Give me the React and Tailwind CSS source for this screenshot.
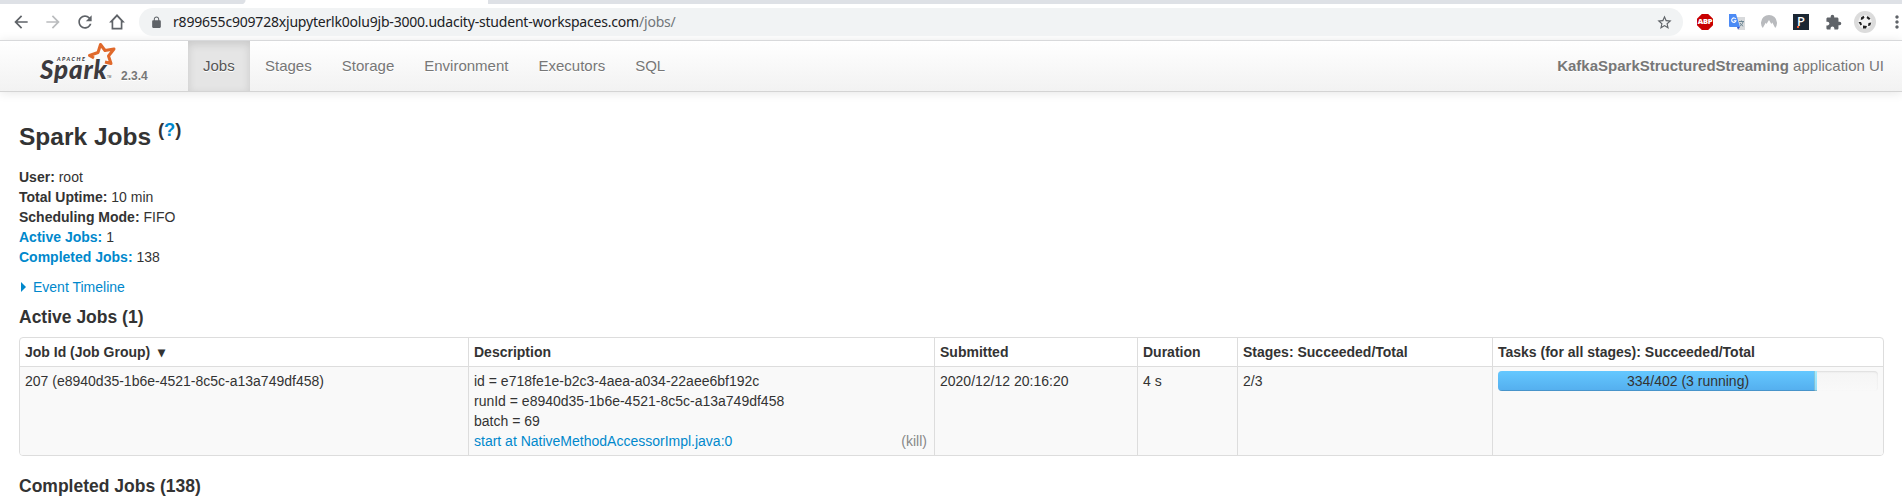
import React from "react";

const NAV = [
  { label: "Jobs", active: true },
  { label: "Stages" },
  { label: "Storage" },
  { label: "Environment" },
  { label: "Executors" },
  { label: "SQL" },
];

const TASKS = { done: 334, running: 3, total: 402 };

function MIcon({ d, className }) {
  return (
    <svg viewBox="0 0 24 24" className={className} fill="currentColor" fillRule="evenodd">
      <path d={d} />
    </svg>
  );
}

function TabStrip() {
  return (
    <div className="flex h-1 bg-[#dee1e6]">
      <div className="w-[241px] rounded-br-[4px] bg-[#dee1e6]" />
      <div className="h-1 w-[247px] bg-[radial-gradient(circle_at_0_0,#dee1e6_4px,#fff_5px)]" />
    </div>
  );
}

function Toolbar() {
  return (
    <div className="flex h-9 items-center bg-white text-[#5f6368]">
      <div className="flex w-[139px] shrink-0 items-center gap-3 pl-[11px]">
        <MIcon className="size-5 shrink-0" d="M20 11H7.83l5.59-5.59L12 4l-8 8 8 8 1.41-1.41L7.83 13H20v-2z" />
        <MIcon className="size-5 shrink-0 text-[#babcbe]" d="M12 4l-1.41 1.41L16.17 11H4v2h12.17l-5.58 5.59L12 20l8-8z" />
        <MIcon className="size-5 shrink-0" d="M17.65 6.35C16.2 4.9 14.21 4 12 4c-4.42 0-7.99 3.58-7.99 8s3.57 8 7.99 8c3.73 0 6.84-2.55 7.73-6h-2.08c-.82 2.33-3.04 4-5.65 4-3.31 0-6-2.69-6-6s2.69-6 6-6c1.66 0 3.14.69 4.22 1.78L13 11h7V4l-2.35 2.35z" />
        <MIcon className="size-5 shrink-0" d="M12 2.500L2.500 12.500h3V21h13v-8.500h3L12 2.500zM12 5.600l4.500 4.800V19h-9v-8.600L12 5.600z" />
      </div>
      <div className="flex h-7 w-[1544px] shrink-0 items-center rounded-full bg-[#f1f3f4] pr-[10px] pl-[11px]">
        <MIcon className="mr-[10px] size-[13px] shrink-0" d="M18 8h-1V6c0-2.760-2.240-5-5-5S7 3.240 7 6v2H6c-1.100 0-2 .9-2 2v10c0 1.100.9 2 2 2h12c1.100 0 2-.9 2-2V10c0-1.100-.9-2-2-2zM8.900 6c0-1.710 1.390-3.100 3.100-3.100s3.100 1.390 3.100 3.100v2H8.900z" />
        <div className="font-['Noto_Sans',sans-serif] text-[14px] leading-7 tracking-[-0.200px] whitespace-pre text-[#202124]">
          r899655c909728xjupyterlk0olu9jb-3000.udacity-student-workspaces.com<span className="text-[#72767a]">/jobs/</span>
        </div>
        <MIcon className="ml-auto size-[17px]" d="M22 9.240l-7.190-.620L12 2 9.190 8.630 2 9.240l5.460 4.730L5.820 21 12 17.270 18.180 21l-1.630-7.030L22 9.240zM12 15.400l-3.760 2.270 1-4.280-3.320-2.880 4.380-.380L12 6.100l1.710 4.040 4.380.380-3.320 2.880 1 4.280L12 15.400z" />
      </div>
      <div className="flex h-9 flex-1 items-center pl-[14px]">
        <div className="flex size-4 items-center justify-center bg-[#c80000] font-['Open_Sans',sans-serif] text-[7.500px] leading-none font-extrabold tracking-[-0.200px] text-white [clip-path:polygon(30%_0,70%_0,100%_30%,100%_70%,70%_100%,30%_100%,0_70%,0_30%)]">
          ABP
        </div>
        <svg viewBox="0 0 16 16" className="ml-4 size-4">
          <path d="M6 3h10v13H9z" fill="#d8dadc" />
          <path d="M0 0h7l4 13H1a1 1 0 0 1-1-1z" fill="#4c8bf5" />
          <path d="M8 13h3l-2 2.500z" fill="#3450c8" />
          <path d="M6.800 5A2.200 2.200 0 1 0 7 6.800H4.800" fill="none" stroke="#fff" strokeWidth="1.100" />
          <path d="M10 7.500h5M12.500 6.500v1M14 8c-.5 2-2 3.500-3 4M11 9c.7 1.500 2 2.500 3.200 3.200" fill="none" stroke="#607d8b" strokeWidth=".9" />
        </svg>
        <svg viewBox="0 0 16 16" className="ml-4 size-4">
          <path d="M1.800 14A8 8 0 1 1 14.200 14L11.300 8.500 10.300 10 8 6 5.500 10 4.700 8.700z" fill="#b9bbbe" />
        </svg>
        <div className="relative ml-4 flex size-4 flex-col items-center bg-[#1b2733] font-['Noto_Sans',sans-serif] text-[13px] leading-[14px] font-medium text-white">
          P
          <span className="absolute bottom-[2px] left-[4px] size-[2px] bg-[#f0532d]" />
        </div>
        <MIcon className="ml-4 size-[17px]" d="M20.500 11H19V7c0-1.100-.9-2-2-2h-4V3.500a2.500 2.500 0 0 0-5 0V5H4c-1.100 0-1.990.9-1.990 2v3.800H3.500c1.490 0 2.700 1.210 2.700 2.700s-1.210 2.700-2.700 2.700H2V20c0 1.100.9 2 2 2h3.800v-1.500c0-1.490 1.210-2.700 2.700-2.700s2.700 1.210 2.700 2.700V22H17c1.100 0 2-.9 2-2v-4h1.500a2.500 2.500 0 0 0 0-5z" />
        <svg viewBox="0 0 22 22" className="ml-[12px] size-[22px]">
          <circle cx="11" cy="11" r="11" fill="#dcdcdc" />
          <circle cx="11" cy="11" r="6.800" fill="#f4f4f4" />
          <path d="M7 6.500l2.500-1.700 1 1.700-1.500 1.800-2.200.7zM13.500 5l3 2.500-1.500 1.500-2.500-2zM4.500 11l2.500 0 1 2.500-1.500 1zM14.500 12l2.800-.500-1 3-2.300.500zM9 14.500l4 .500-1 2.500H9z" fill="#222" />
        </svg>
        <MIcon className="ml-[11px] size-5 shrink-0" d="M12 8c1.100 0 2-.9 2-2s-.9-2-2-2-2 .9-2 2 .9 2 2 2zm0 2c-1.100 0-2 .9-2 2s.9 2 2 2 2-.9 2-2-.9-2-2-2zm0 6c-1.100 0-2 .9-2 2s.9 2 2 2 2-.9 2-2-.9-2-2-2z" />
      </div>
    </div>
  );
}

function Logo() {
  return (
    <div className="relative h-[50px] w-[82px] text-[#3c3a3e]">
      <span className="absolute top-[15px] left-[18px] font-['Lato',sans-serif] text-[5.500px] leading-[6px] font-black tracking-[1.500px] italic">APACHE</span>
      <span className="absolute top-[22px] left-px font-['Lato',sans-serif] text-[26px] leading-[12px] font-black tracking-[0.800px] italic">Spark</span>
      <svg viewBox="0 0 30 26" className="absolute top-px left-[48px] h-[26px] w-[30px]" fill="none" stroke="#e0692b" strokeWidth="3" strokeLinejoin="round">
        <path d="M7 16L2.500 13.500 11 10.500 13.500 2.500 18 8.500 27 7 21.500 14 24 21.500 18 20" />
      </svg>
      <span className="absolute top-[34px] left-[68px] text-[3px] leading-[4px]">TM</span>
    </div>
  );
}

function Navbar() {
  return (
    <div className="flex h-[52px] border-y border-t-[#d8d9db] border-b-[#d4d4d4] bg-linear-to-b from-white to-[#f2f2f2] text-[15px] leading-5 text-[#777] shadow-[0_1px_10px_rgba(0,0,0,0.1)] [text-shadow:0_1px_0_#fff]">
      <div className="flex w-[188px] pl-[39px]">
        <Logo />
        <span className="pt-[25px] text-[12px] leading-5 font-bold">2.3.4</span>
      </div>
      {NAV.map((n) => (
        <a
          key={n.label}
          className={
            n.active
              ? "h-[50px] w-[62px] bg-[#e5e5e5] px-[15px] pt-[15px] text-[#555] shadow-[inset_0_3px_8px_rgba(0,0,0,0.125)]"
              : "h-[50px] px-[15px] pt-[15px]"
          }
        >
          {n.label}
        </a>
      ))}
      <p className="ml-auto pt-[15px] pr-[18px]">
        <strong>KafkaSparkStructuredStreaming</strong> application UI
      </p>
    </div>
  );
}

function Summary({ label, value, link }) {
  return (
    <li>
      <strong className={link ? "text-[#0088cc]" : ""}>{label}:</strong> {value}
    </li>
  );
}

function JobsTable() {
  const head = "border-l border-[#ddd] px-[5px] py-1 text-left font-bold first:border-l-0";
  const cell = "border-t border-l border-[#ddd] bg-[#f9f9f9] px-[5px] py-1 align-top first:border-l-0";
  return (
    <div className="w-[1865px] overflow-hidden rounded border border-[#ddd]">
      <table className="w-[1863px] table-fixed border-separate border-spacing-0">
        <colgroup>
          <col className="w-[448px]" />
          <col className="w-[466px]" />
          <col className="w-[203px]" />
          <col className="w-[100px]" />
          <col className="w-[255px]" />
          <col className="w-[391px]" />
        </colgroup>
        <thead>
          <tr>
            <th className={head}>Job Id (Job Group)&nbsp;&nbsp;▾</th>
            <th className={head}>Description</th>
            <th className={head}>Submitted</th>
            <th className={head}>Duration</th>
            <th className={head}>Stages: Succeeded/Total</th>
            <th className={head}>Tasks (for all stages): Succeeded/Total</th>
          </tr>
        </thead>
        <tbody>
          <tr>
            <td className={cell}>207 (e8940d35-1b6e-4521-8c5c-a13a749df458)</td>
            <td className={cell}>
              <div>id = e718fe1e-b2c3-4aea-a034-22aee6bf192c</div>
              <div>runId = e8940d35-1b6e-4521-8c5c-a13a749df458</div>
              <div>batch = 69</div>
              <div className="flex justify-between pr-[2px]">
                <a className="text-[#0088cc]">start at NativeMethodAccessorImpl.java:0</a>
                <a className="text-[#888]">(kill)</a>
              </div>
            </td>
            <td className={cell}>2020/12/12 20:16:20</td>
            <td className={cell}>4 s</td>
            <td className={cell}>2/3</td>
            <td className={cell}>
              <div className="relative flex h-5 overflow-hidden rounded bg-linear-to-b from-[#f5f5f5] to-[#f9f9f9] shadow-[inset_0_1px_2px_rgba(0,0,0,0.1)]">
                <div
                  className="h-5 bg-linear-to-b from-[#64c8ff] to-[#54aeee] shadow-[inset_0_-1px_0_rgba(0,0,0,0.15)]"
                  style={{ width: `${(TASKS.done / TASKS.total) * 100}%` }}
                />
                <div
                  className="h-5 bg-linear-to-b from-[#a4edff] to-[#94dcfa] shadow-[inset_0_-1px_0_rgba(0,0,0,0.15),inset_1px_0_0_rgba(0,0,0,0.15)]"
                  style={{ width: `${(TASKS.running / TASKS.total) * 100}%` }}
                />
                <span className="absolute inset-0 text-center">334/402 (3 running)</span>
              </div>
            </td>
          </tr>
        </tbody>
      </table>
    </div>
  );
}

export default function App() {
  return (
    <div className="h-[496px] overflow-hidden bg-white font-['Liberation_Sans',Arial,sans-serif] text-[14px] leading-5 text-[#333]">
      <TabStrip />
      <Toolbar />
      <Navbar />
      <main className="px-[19px] pt-[25px]">
        <h3 className="text-[24.500px] leading-10 font-bold">
          Spark Jobs{" "}
          <sup className="relative -top-[0.500em] align-baseline text-[18.400px] leading-none">
            (<a className="text-[#0088cc]">?</a>)
          </sup>
        </h3>
        <ul className="mt-[10px]">
          <Summary label="User" value="root" />
          <Summary label="Total Uptime" value="10 min" />
          <Summary label="Scheduling Mode" value="FIFO" />
          <Summary label="Active Jobs" value="1" link />
          <Summary label="Completed Jobs" value="138" link />
        </ul>
        <div className="mt-[10px] flex items-center text-[#0088cc]">
          <span className="mr-[7px] ml-[2px] border-y-5 border-l-5 border-y-transparent border-l-[#0088cc]" />
          Event Timeline
        </div>
        <h4 className="mt-[10px] mb-[10px] text-[17.500px] leading-5 font-bold">Active Jobs (1)</h4>
        <JobsTable />
        <h4 className="mt-[20px] text-[17.500px] leading-5 font-bold">Completed Jobs (138)</h4>
      </main>
    </div>
  );
}
